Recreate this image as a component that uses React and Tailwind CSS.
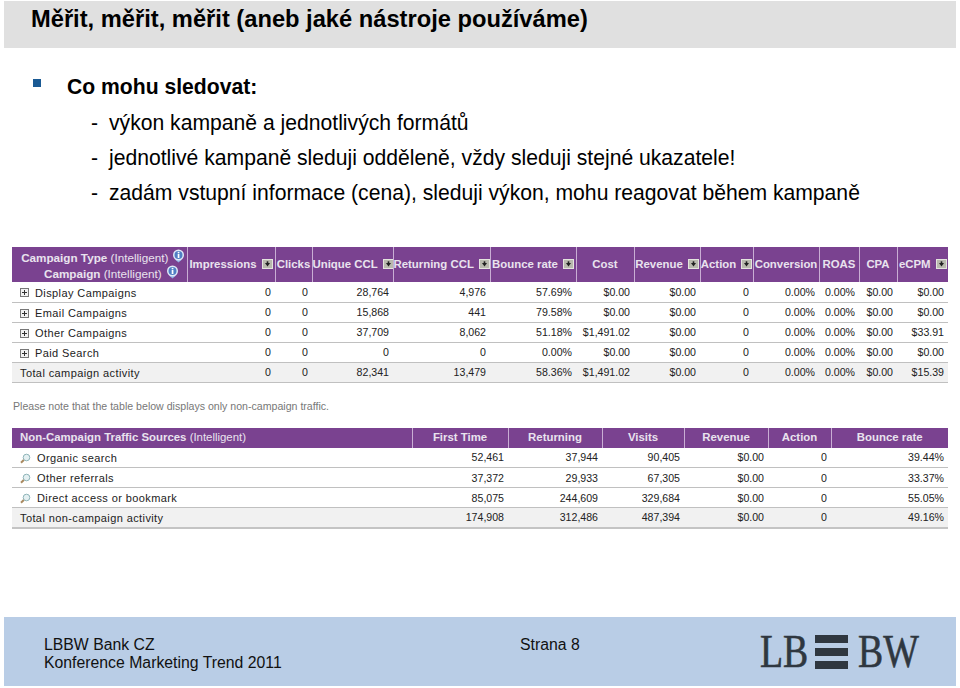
import React from 'react';

const purple = 'bg-[#7a4290]';

const campaignCols = [175, 88, 37, 81, 97, 86, 58, 66, 53, 66, 40, 38, 51];
const trafficCols = [400, 96, 94, 82, 84, 63, 117];

const campaignHead = [
  { label: 'Impressions', sort: true },
  { label: 'Clicks' },
  { label: 'Unique CCL', sort: true },
  { label: 'Returning CCL', sort: true },
  { label: 'Bounce rate', sort: true },
  { label: 'Cost' },
  { label: 'Revenue', sort: true },
  { label: 'Action', sort: true },
  { label: 'Conversion' },
  { label: 'ROAS' },
  { label: 'CPA' },
  { label: 'eCPM', sort: true },
];

const campaignRows = [
  ['Display Campaigns', '0', '0', '28,764', '4,976', '57.69%', '$0.00', '$0.00', '0', '0.00%', '0.00%', '$0.00', '$0.00'],
  ['Email Campaigns', '0', '0', '15,868', '441', '79.58%', '$0.00', '$0.00', '0', '0.00%', '0.00%', '$0.00', '$0.00'],
  ['Other Campaigns', '0', '0', '37,709', '8,062', '51.18%', '$1,491.02', '$0.00', '0', '0.00%', '0.00%', '$0.00', '$33.91'],
  ['Paid Search', '0', '0', '0', '0', '0.00%', '$0.00', '$0.00', '0', '0.00%', '0.00%', '$0.00', '$0.00'],
];
const campaignTotal = ['Total campaign activity', '0', '0', '82,341', '13,479', '58.36%', '$1,491.02', '$0.00', '0', '0.00%', '0.00%', '$0.00', '$15.39'];

const trafficHead = ['First Time', 'Returning', 'Visits', 'Revenue', 'Action', 'Bounce rate'];
const trafficRows = [
  ['Organic search', '52,461', '37,944', '90,405', '$0.00', '0', '39.44%'],
  ['Other referrals', '37,372', '29,933', '67,305', '$0.00', '0', '33.37%'],
  ['Direct access or bookmark', '85,075', '244,609', '329,684', '$0.00', '0', '55.05%'],
];
const trafficTotal = ['Total non-campaign activity', '174,908', '312,486', '487,394', '$0.00', '0', '49.16%'];

function InfoIcon() {
  return (
    <svg width="13" height="14" viewBox="0 0 13 14" className="inline-block ml-[4px] align-[-1px]">
      <path d="M3 10.5 6.5 13.5 10 10.5Z" fill="#8fb4e6" />
      <circle cx="6.5" cy="6" r="5.5" fill="#dfeaf8" />
      <circle cx="6.5" cy="6" r="4" fill="#4f7fc4" />
      <rect x="5.7" y="5" width="1.7" height="4" fill="#fff" />
      <rect x="5.7" y="2.8" width="1.7" height="1.5" fill="#fff" />
    </svg>
  );
}

function SortIcon() {
  return (
    <svg width="11" height="10" viewBox="0 0 11 10" className="inline-block ml-[5px] align-[-1px] shrink-0">
      <rect width="11" height="10" fill="#b9b9ae" />
      <rect x="0.5" y="0.5" width="10" height="9" fill="none" stroke="#e4e4de" />
      <path d="M3 4h5L5.5 7.5Z" fill="#222" />
      <rect x="4.7" y="2.3" width="1.6" height="2" fill="#222" />
    </svg>
  );
}

function PlusBox() {
  return (
    <svg width="9" height="9" viewBox="0 0 9 9" className="shrink-0">
      <rect x="0.5" y="0.5" width="8" height="8" fill="#f2f2f2" stroke="#777" />
      <path d="M2 4.5h5M4.5 2v5" stroke="#333" />
    </svg>
  );
}

function Lens() {
  return (
    <svg width="11" height="11" viewBox="0 0 11 11" className="shrink-0">
      <circle cx="6.5" cy="4.5" r="3.3" fill="#e4f0f2" stroke="#8fb4b8" />
      <path d="M3.8 7 1 9.8" stroke="#a98a60" strokeWidth="2" />
    </svg>
  );
}

function HeadCell({ children, last }) {
  return (
    <th className={`${last ? '' : 'border-r border-r-[#c9aed4]'} p-0 text-center font-bold whitespace-nowrap overflow-hidden text-[#e9e3ee]`}>
      {children}
    </th>
  );
}

function DataRow({ row, icon, total, rowClass, cellClass = '' }) {
  return (
    <tr className={`${rowClass} ${total ? 'bg-[#f1f1f1]' : 'bg-white'}`}>
      <td className={`p-0 pl-[8px] text-left text-[11px] tracking-[0.4px] ${cellClass}`}>
        <div className="flex items-center gap-[6px] whitespace-nowrap">
          {icon}
          <span>{row[0]}</span>
        </div>
      </td>
      {row.slice(1).map((v, i) => (
        <td key={i} className={`p-0 pr-[4px] text-right whitespace-nowrap ${cellClass}`}>{v}</td>
      ))}
    </tr>
  );
}

function ColGroup({ widths }) {
  return (
    <colgroup>
      {widths.map((w, i) => (
        <col key={i} style={{ width: w }} />
      ))}
    </colgroup>
  );
}

function CampaignTable() {
  return (
    <table className="table-fixed w-[936px] border-collapse text-[10.6px] text-[#222]">
      <ColGroup widths={campaignCols} />
      <thead>
        <tr className={`${purple} h-[35px] text-[11.4px]`}>
          <th className="border-r border-r-[#c9aed4] p-0 pl-[8px] text-center text-[11.7px] leading-[15px] font-bold text-[#e9e3ee] whitespace-nowrap">
            <div>Campaign Type <span className="font-normal">(Intelligent)</span><InfoIcon /></div>
            <div className="pl-[16px]">Campaign <span className="font-normal">(Intelligent)</span><InfoIcon /></div>
          </th>
          {campaignHead.map((h, i) => (
            <HeadCell key={h.label} last={i === campaignHead.length - 1}>
              {h.label}
              {h.sort && <SortIcon />}
            </HeadCell>
          ))}
        </tr>
      </thead>
      <tbody>
        {campaignRows.map((r) => (
          <DataRow key={r[0]} row={r} icon={<PlusBox />} cellClass="pt-[2px]" rowClass="h-[20px] border-b border-b-[#c0c0c0]" />
        ))}
        <DataRow row={campaignTotal} total cellClass="pt-[2px]" rowClass="h-[20px] border-b border-b-[#c0c0c0]" />
      </tbody>
    </table>
  );
}

function TrafficTable() {
  return (
    <table className="table-fixed w-[936px] border-collapse text-[10.6px] text-[#222]">
      <ColGroup widths={trafficCols} />
      <thead>
        <tr className={`${purple} h-[20px] text-[11.4px]`}>
          <th className="border-r border-r-[#c9aed4] p-0 pl-[8px] text-left font-bold text-[#e9e3ee] whitespace-nowrap">
            Non-Campaign Traffic Sources <span className="font-normal">(Intelligent)</span>
          </th>
          {trafficHead.map((h, i) => (
            <HeadCell key={h} last={i === trafficHead.length - 1}>{h}</HeadCell>
          ))}
        </tr>
      </thead>
      <tbody>
        {trafficRows.map((r) => (
          <DataRow key={r[0]} row={r} icon={<Lens />} cellClass="pt-[2px]" rowClass="h-[20px] border-b border-b-[#c0c0c0]" />
        ))}
        <DataRow row={trafficTotal} total cellClass="pt-[2px]" rowClass="h-[20px] border-b-2 border-b-[#c4c4c4]" />
      </tbody>
    </table>
  );
}

function Logo() {
  return (
    <div className="flex items-center font-['Liberation_Serif',serif] text-[46px] leading-none text-[#2f3740] [-webkit-text-stroke:0.6px_#2f3740]">
      <span className="w-[55px] inline-block origin-left scale-x-[0.82]">LB</span>
      <div className="flex flex-col gap-[5px] w-[33px]">
        <div className="h-[8px] bg-[#2f3740]" />
        <div className="h-[8px] bg-[#2f3740]" />
        <div className="h-[8px] bg-[#2f3740]" />
      </div>
      <span className="ml-[10px] w-[61px] inline-block origin-left scale-x-[0.82]">BW</span>
    </div>
  );
}

export default function App() {
  return (
    <div className="w-[960px] h-[688px] bg-white flex flex-col pt-px pb-[2px] px-[4px] overflow-hidden font-['Liberation_Sans',Arial,sans-serif] text-black">
      <header className="w-[952px] h-[47px] shrink-0 bg-[#e0e0e0] pl-[27px] pt-[5px] text-[23.7px] leading-[26px] font-bold">
        Měřit, měřit, měřit (aneb jaké nástroje používáme)
      </header>

      <section className="mt-[27px] pl-[29px] text-[21.15px] leading-[24px]">
        <div className="flex items-start font-bold">
          <span className="mt-[4px] mr-[26px] w-[8px] h-[8px] bg-[#1a5a94] shrink-0" />
          Co mohu sledovat:
        </div>
        <div className="ml-[58px] mt-[12px] flex flex-col gap-[11px]">
          {[
            'výkon kampaně a jednotlivých formátů',
            'jednotlivé kampaně sleduji odděleně, vždy sleduji stejné ukazatele!',
            'zadám vstupní informace (cena), sleduji výkon, mohu reagovat během kampaně',
          ].map((t) => (
            <div key={t} className="flex">
              <span className="w-[18px] shrink-0">-</span>
              <span className="whitespace-nowrap">{t}</span>
            </div>
          ))}
        </div>
      </section>

      <section className="ml-[8px] mt-[42px]">
        <CampaignTable />
        <p className="mt-[17px] pl-[1px] text-[10.6px] leading-[13px] text-[#777]">
          Please note that the table below displays only non-campaign traffic.
        </p>
        <div className="mt-[15px]">
          <TrafficTable />
        </div>
      </section>

      <footer className="mt-auto w-[952px] h-[69px] shrink-0 bg-[#b9cde6] flex text-[15.8px] leading-[18px] text-[#111]">
        <div className="pl-[40px] pt-[19px] w-[516px] shrink-0">
          <div>LBBW Bank CZ</div>
          <div>Konference Marketing Trend 2011</div>
        </div>
        <div className="pt-[19px] w-[240px] shrink-0">Strana 8</div>
        <Logo />
      </footer>
    </div>
  );
}
